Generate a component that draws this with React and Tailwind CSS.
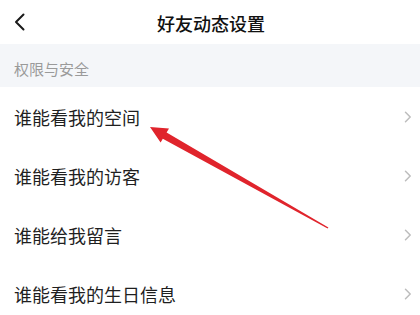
import React from "react";

const rows = ["谁能看我的空间", "谁能看我的访客", "谁能给我留言", "谁能看我的生日信息"];

function Chevron() {
  return (
    <svg width="8" height="12" viewBox="0 0 8 12" fill="none">
      <path d="M1.5 1.2 L6.2 6 L1.5 10.8" stroke="#bdbdbd" strokeWidth="1.5" strokeLinecap="round" strokeLinejoin="round" />
    </svg>
  );
}

export default function App() {
  return (
    <div
      className="relative w-[420px] h-[315px] overflow-hidden bg-white"
      style={{ fontFamily: '"Noto Sans CJK SC", "Noto Sans", sans-serif' }}
    >
      {/* header */}
      <div className="relative h-[44px] flex items-center justify-center">
        <span className="absolute left-[14px] top-[13px]">
          <svg width="12" height="18" viewBox="0 0 12 18" fill="none">
            <path d="M9.5 1.5 L2 9 L9.5 16.5" stroke="#1a1a1a" strokeWidth="2" strokeLinecap="round" strokeLinejoin="round" />
          </svg>
        </span>
        <p className="text-[18px] font-medium text-[#111] leading-none pt-[2px] pl-[2px]">好友动态设置</p>
      </div>

      {/* section label */}
      <div className="h-[43px] bg-[#f4f6f9] flex items-center px-[14px] pt-[6px]">
        <p className="text-[15px] text-[#9a9a9a] leading-none">权限与安全</p>
      </div>

      {/* rows */}
      <ul>
        {rows.map((t) => (
          <li key={t} className="h-[59px] flex items-center justify-between pl-[14px] pr-[8px]">
            <span className="text-[18px] text-[#1f1f1f] leading-none">{t}</span>
            <Chevron />
          </li>
        ))}
      </ul>

      {/* red annotation arrow */}
      <svg className="absolute left-0 top-0 pointer-events-none" width="420" height="315" viewBox="0 0 420 315">
        <polygon
          points="150,127 169,128.6 166.6,132.4 328.4,227.6 327.6,228.4 162.8,138.8 160.6,142.4"
          fill="#e0242c"
        />
      </svg>
    </div>
  );
}
